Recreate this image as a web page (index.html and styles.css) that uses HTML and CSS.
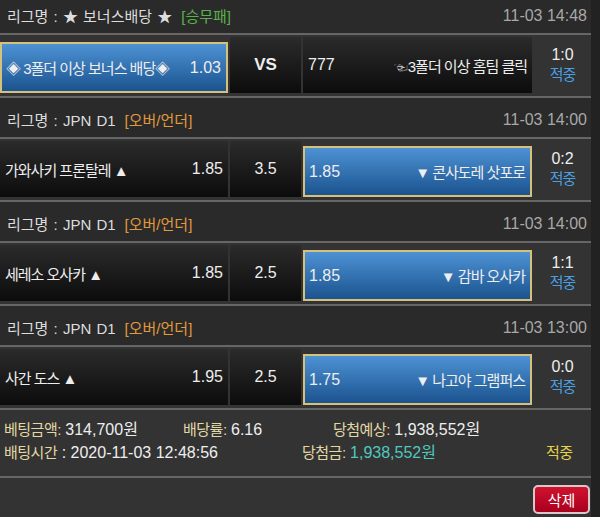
FILE: index.html
```html
<!DOCTYPE html>
<html lang="ko">
  <head>
    <meta charset="UTF-8" />
    <title>베팅내역</title>
    <link rel="stylesheet" href="styles.css">
  </head>
  <body>
    <div class="slip">
      <div class="game">
        <div class="league">
          <span class="league-name">리그명 : ★ 보너스배당 ★<span class="type type-win">[승무패]</span></span>
          <span class="time">11-03 14:48</span>
        </div>
        <div class="odds-row">
          <div class="pick picked"><span class="team">◈ 3폴더 이상 보너스 배당◈</span><span class="odd">1.03</span></div>
          <div class="pick mid vs">VS</div>
          <div class="pick"><span class="odd">777</span><span class="team"><span class="hand">☜</span>3폴더 이상 홈팀 클릭</span></div>
          <div class="result"><span class="score">1:0</span><span class="status">적중</span></div>
        </div>
      </div>

      <div class="game">
        <div class="league">
          <span class="league-name">리그명 : JPN D1<span class="type type-ou">[오버/언더]</span></span>
          <span class="time">11-03 14:00</span>
        </div>
        <div class="odds-row">
          <div class="pick"><span class="team">가와사키 프론탈레 ▲</span><span class="odd">1.85</span></div>
          <div class="pick mid">3.5</div>
          <div class="pick picked"><span class="odd">1.85</span><span class="team">▼ 콘사도레 삿포로</span></div>
          <div class="result"><span class="score">0:2</span><span class="status">적중</span></div>
        </div>
      </div>

      <div class="game">
        <div class="league">
          <span class="league-name">리그명 : JPN D1<span class="type type-ou">[오버/언더]</span></span>
          <span class="time">11-03 14:00</span>
        </div>
        <div class="odds-row">
          <div class="pick"><span class="team">세레소 오사카 ▲</span><span class="odd">1.85</span></div>
          <div class="pick mid">2.5</div>
          <div class="pick picked"><span class="odd">1.85</span><span class="team">▼ 감바 오사카</span></div>
          <div class="result"><span class="score">1:1</span><span class="status">적중</span></div>
        </div>
      </div>

      <div class="game">
        <div class="league">
          <span class="league-name">리그명 : JPN D1<span class="type type-ou">[오버/언더]</span></span>
          <span class="time">11-03 13:00</span>
        </div>
        <div class="odds-row">
          <div class="pick"><span class="team">사간 도스 ▲</span><span class="odd">1.95</span></div>
          <div class="pick mid">2.5</div>
          <div class="pick picked"><span class="odd">1.75</span><span class="team">▼ 나고야 그램퍼스</span></div>
          <div class="result"><span class="score">0:0</span><span class="status">적중</span></div>
        </div>
      </div>

      <!-- bet summary -->
      <div class="summary">
        <div class="sum-line">
          <span class="cell cell-amount"><span class="label">베팅금액:</span> 314,700원</span>
          <span class="cell cell-rate"><span class="label">배당률:</span> 6.16</span>
          <span class="cell"><span class="label">당첨예상:</span> 1,938,552원</span>
        </div>
        <div class="sum-line">
          <span class="cell cell-time"><span class="label">배팅시간</span> : 2020-11-03 12:48:56</span>
          <span class="cell cell-win"><span class="label">당첨금:</span> <span class="win-amount">1,938,552원</span></span>
          <span class="cell label hit">적중</span>
        </div>
      </div>

      <div class="actions">
        <button class="delete-button">삭제</button>
      </div>
    </div>
  </body>
</html>
```

FILE: styles.css
```css
:root {
  --page-bg: #222;
  --row-bg: #333;
  --header-bg: #2a2a2a;
  --line: #666;
  --text: #eee;
  --muted: #a8a8a8;
  --label: #e2d8a4;
  --pick-border: #d6c07a;
}

body {
  margin: 0;
  background-color: var(--page-bg);
  font-family: "Liberation Sans", "Noto Sans CJK KR", sans-serif;
  font-size: 16px;
  color: var(--text);
}

.slip {
  width: 591px;
  margin-top: -6px;
  background-color: var(--row-bg);
}

.league {
  box-sizing: border-box;
  height: 41px;
  display: flex;
  align-items: center;
  justify-content: space-between;
  padding: 4px 4px 0 7px;
  background-color: var(--header-bg);
  border-bottom: 2px solid var(--line);
}

.league-name {
  font-size: 15px;
  word-spacing: 1px;
  color: #ddd;
}

.type {
  margin-left: 9px;
}

.type-win {
  color: #5cb24a;
}

.type-ou {
  color: #e39a3c;
}

.time {
  color: var(--muted);
}

.odds-row {
  box-sizing: border-box;
  height: 63px;
  display: grid;
  grid-template-columns: 228px 71px 229px 1fr;
  column-gap: 2px;
  padding: 2px 0 3px;
  border-bottom: 2px solid var(--line);
}

.game:last-of-type .odds-row {
  height: 61px;
  border-bottom: 0;
}

.pick {
  display: flex;
  align-items: center;
  justify-content: space-between;
  padding: 0 5px;
  background: linear-gradient(#2b2b2b, #0c0c0c);
  white-space: nowrap;
}

.pick.picked {
  margin-top: 5px;
  padding: 0 5px 0 4px;
  background: linear-gradient(#4d92d4, #1b538f);
  border: 2px solid var(--pick-border);
}

.pick.mid {
  justify-content: center;
}

.vs {
  font-weight: bold;
  font-size: 17px;
}

.team {
  font-size: 15px;
  letter-spacing: -1px;
}

.hand {
  font-size: 14px;
  color: #bbb;
  letter-spacing: 0;
}

.result {
  display: flex;
  flex-direction: column;
  align-items: center;
  justify-content: center;
  line-height: 20px;
}

.status {
  font-size: 15px;
  letter-spacing: -1px;
  color: #4b9fe0;
}

/* bet summary */
.summary {
  box-sizing: border-box;
  height: 68px;
  padding: 8px 0 0 4px;
  border-bottom: 2px solid var(--line);
}

.sum-line {
  display: flex;
  line-height: 23px;
  white-space: nowrap;
}

.cell-amount {
  width: 179px;
}

.cell-rate {
  width: 150px;
}

.cell-time {
  width: 298px;
}

.cell-win {
  width: 244px;
}

.label {
  font-size: 15px;
  letter-spacing: -0.5px;
  color: var(--label);
}

.hit {
  color: #e6d34a;
}

.win-amount {
  color: #4ec9bd;
}

.actions {
  display: flex;
  justify-content: flex-end;
  padding: 7px 1px 8px 0;
}

.delete-button {
  width: 57px;
  height: 29px;
  padding: 0;
  font-family: "Liberation Sans", "Noto Sans CJK KR", sans-serif;
  font-size: 15px;
  color: #fff;
  background: linear-gradient(#d0122e, #a8001e);
  border: 2px solid #d8c8cc;
  border-radius: 5px;
}
```
